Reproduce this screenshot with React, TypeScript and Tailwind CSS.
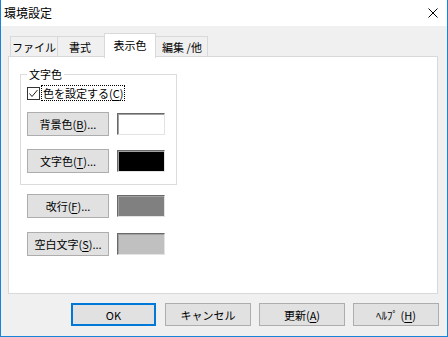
import React from "react";

const font = "font-['Noto_Sans_CJK_JP','Noto_Sans',sans-serif]";

function U({ children }: { children: React.ReactNode }) {
  return <span className="underline underline-offset-2">{children}</span>;
}

function Btn({ children, w = "w-[82px]" }: { children: React.ReactNode; w?: string }) {
  return (
    <div
      className={`${w} h-[24px] shrink-0 bg-[#e1e1e1] border border-[#adadad] flex items-center justify-center text-[11px] leading-[14px] text-black`}
    >
      {children}
    </div>
  );
}

function Swatch({ color }: { color: string }) {
  return (
    <div
      className="ml-[8px] w-[48px] h-[22px] border border-t-[#696969] border-l-[#696969] border-r-[#e3e3e3] border-b-[#e3e3e3] shadow-[inset_1px_1px_0_#a0a0a0]"
      style={{ backgroundColor: color }}
    />
  );
}

export default function App() {
  return (
    <div
      className={`${font} w-[448px] h-[337px] flex flex-col border-x border-b border-[#1883d7] bg-[#f0f0f0] text-black`}
    >
      {/* Title bar */}
      <div className="h-[26px] shrink-0 bg-white flex items-center justify-between pl-[3px] pr-[9px]">
        <span className="text-[12px] leading-[16px]">環境設定</span>
        <svg width="10" height="10" viewBox="0 0 10 10">
          <path d="M0.5 0.5 L9.5 9.5 M9.5 0.5 L0.5 9.5" stroke="#000" strokeWidth="1" fill="none" />
        </svg>
      </div>

      {/* Body */}
      <div className="flex-1 flex flex-col">
        {/* Tabs */}
        <div className="h-[30px] shrink-0 flex items-end pl-[9px] relative z-10 text-[11px]">
          <div className="w-[47px] h-[20px] border-l border-t border-[#d9d9d9] bg-[#f0f0f0] flex items-center justify-center leading-[14px]">
            ファイル
          </div>
          <div className="w-[49px] h-[20px] border-l border-t border-r border-[#d9d9d9] bg-[#f0f0f0] flex items-center justify-center leading-[14px] pr-[3px]">
            書式
          </div>
          <div className="relative z-10 ml-[-2px] mb-[-2px] w-[52px] h-[25px] border-l border-t border-r border-[#d9d9d9] bg-white flex items-start justify-center pt-[4px] leading-[14px]">
            表示色
          </div>
          <div className="ml-[-1px] w-[53px] h-[20px] border-t border-r border-[#d9d9d9] bg-[#f0f0f0] flex items-center justify-center leading-[14px] pl-[2px]">
            編集 /他
          </div>
        </div>

        {/* Panel */}
        <div className="ml-[7px] w-[430px] h-[238px] shrink-0 bg-white border border-[#d9d9d9] flex flex-col">
          {/* Group box */}
          <div className="relative mt-[17px] ml-[11px] w-[157px] h-[111px] border border-[#dcdcdc] flex flex-col pl-[6px] pt-[10px]">
            <span className="absolute left-[6px] top-[-8px] bg-white px-[2px] text-[11px] leading-[14px]">
              文字色
            </span>
            <div className="flex items-center h-[16px]">
              <div className="w-[13px] h-[13px] border border-[#333333] bg-white flex items-center justify-center">
                <svg width="11" height="11" viewBox="0 0 11 11">
                  <polyline points="1.5,5.5 4,8.5 9.5,2" stroke="#222" strokeWidth="1" fill="none" />
                </svg>
              </div>
              <div className="ml-[1px] h-[16px] border border-dotted border-black px-[1px] flex items-center text-[11px] leading-[14px]">
                色を設定する(<U>C</U>)
              </div>
            </div>
            <div className="flex items-center mt-[11px]">
              <Btn>
                背景色(<U>B</U>)...
              </Btn>
              <Swatch color="#ffffff" />
            </div>
            <div className="flex items-center mt-[13px]">
              <Btn>
                文字色(<U>T</U>)...
              </Btn>
              <Swatch color="#000000" />
            </div>
          </div>

          <div className="flex items-center mt-[9px] ml-[18px]">
            <Btn>
              改行(<U>F</U>)...
            </Btn>
            <Swatch color="#808080" />
          </div>
          <div className="flex items-center mt-[14px] ml-[18px]">
            <Btn>
              空白文字(<U>S</U>)...
            </Btn>
            <Swatch color="#c0c0c0" />
          </div>
        </div>

        {/* Bottom buttons */}
        <div className="flex mt-[9px] ml-[70px] text-[11px] leading-[14px]">
          <div className="w-[85px] h-[23px] bg-[#e1e1e1] border-2 border-[#0078d7] flex items-center justify-center">
            OK
          </div>
          <div className="ml-[9px] w-[86px] h-[23px] bg-[#e1e1e1] border border-[#adadad] flex items-center justify-center">
            キャンセル
          </div>
          <div className="ml-[8px] w-[86px] h-[23px] bg-[#e1e1e1] border border-[#adadad] flex items-center justify-center">
            更新(<U>A</U>)
          </div>
          <div className="ml-[8px] w-[86px] h-[23px] bg-[#e1e1e1] border border-[#adadad] flex items-center justify-center">
            ﾍﾙﾌﾟ (<U>H</U>)
          </div>
        </div>
      </div>
    </div>
  );
}
